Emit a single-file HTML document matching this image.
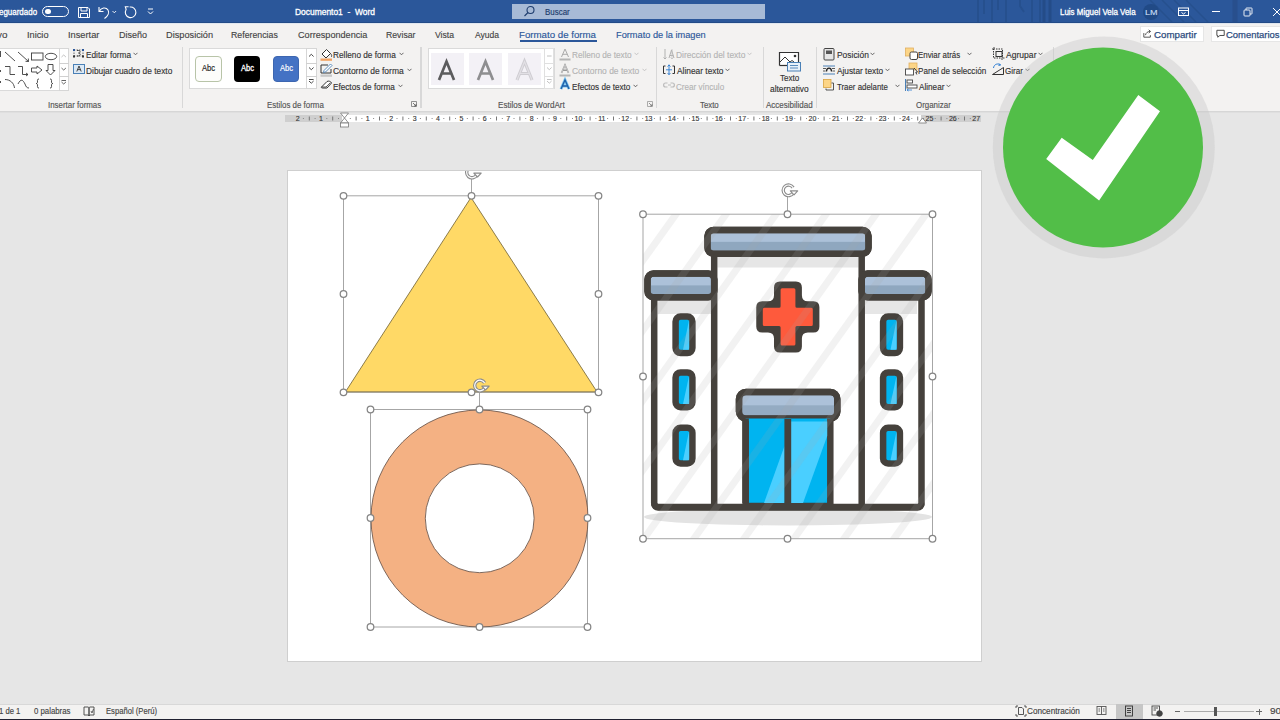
<!DOCTYPE html>
<html><head><meta charset="utf-8">
<style>
*{margin:0;padding:0;box-sizing:border-box}
html,body{width:1280px;height:720px;overflow:hidden;background:#e6e6e6;font-family:"Liberation Sans",sans-serif;position:relative}
.a{position:absolute;white-space:nowrap}
</style></head>
<body>
<div class="a" style="left:0;top:23px;width:1280px;height:87.5px;background:#f3f2f1"></div>
<div class="a" style="left:0;top:110.5px;width:1280px;height:1px;background:#d6d6d6"></div>
<div class="a" style="left:0;top:111.5px;width:1280px;height:1px;background:#dfdfdf"></div>
<div class="a" style="left:0;top:0;width:1280px;height:23px;background:#2b579a"></div>
<div class="a" style="left:0;top:22px;width:1280px;height:1px;background:#234b87"></div>
<svg class="a" style="left:940px;top:0" width="340" height="22" viewBox="0 0 340 22"><g stroke="#26508e" fill="none"><path d="M38 0 V22 M44 0 V14 M52 0 V22 M58 0 V10 M66 0 V22 M80 0 V6 L84 12 M92 0 V22 M100 0 V22" stroke-width="2"/><path d="M104 0 V22 M110 0 V22" stroke-width="3" stroke="#244c88"/><path d="M210 0 L232 22 M222 0 L244 22 M234 0 L256 22 M246 0 L268 22" stroke-width="1.5"/><path d="M295 0 V22" stroke-width="5" stroke="#284f8d"/></g></svg>
<div class="a" style="left:42px;top:5.5px;width:26.5px;height:11.5px;border:1.2px solid #fff;border-radius:6px"></div>
<div class="a" style="left:45.3px;top:8.8px;width:5.5px;height:5.5px;background:#fff;border-radius:50%"></div>
<svg class="a" style="left:77px;top:6px" width="14" height="13" viewBox="0 0 14 13" fill="none" stroke="#fff" stroke-width="1">
<path d="M1.5 1.5 H11 L12.5 3 V11.5 H1.5 Z"/><path d="M4 1.5 V5 H10 V1.5"/><path d="M3.5 11.5 V7.5 H10.5 V11.5"/></svg>
<svg class="a" style="left:97px;top:5px" width="22" height="15" viewBox="0 0 22 15" fill="none" stroke="#fff" stroke-width="1.1">
<path d="M2 2 V6.5 H6.5"/><path d="M2.3 6.3 C4 2.5 9 1.8 11 5 C12.5 7.5 11 11 7.5 13.5"/><path d="M15.5 6 L17.3 7.8 L19.1 6" stroke-width="0.9"/></svg>
<svg class="a" style="left:123px;top:4px" width="15" height="16" viewBox="0 0 15 16" fill="none" stroke="#fff" stroke-width="1.1">
<path d="M6.68 3.08 A5.3 5.3 0 1 1 3.01 5.65"/><path d="M5.6 2.7 H2.3 L3.3 5.9"/></svg>
<svg class="a" style="left:146px;top:7px" width="9" height="9" viewBox="0 0 9 9" fill="none" stroke="#fff" stroke-width="1">
<path d="M2 2 H7"/><path d="M2 4.5 L4.5 7 L7 4.5"/></svg>
<div class="a" style="left:512px;top:3.7px;width:253px;height:15.7px;background:#a7bad6"></div>
<svg class="a" style="left:523px;top:5px" width="13" height="13" viewBox="0 0 13 13" fill="none" stroke="#1e3d6e" stroke-width="1.1">
<circle cx="7.5" cy="5" r="3.5"/><path d="M5 7.5 L1.5 11"/></svg>
<div class="a" style="left:1143px;top:4px;width:16px;height:16px;border-radius:50%;background:#214a86"></div>
<svg class="a" style="left:1177px;top:7px" width="13" height="10" viewBox="0 0 13 10" fill="none" stroke="#fff" stroke-width="1">
<rect x="1.5" y="1" width="10" height="7.5"/><path d="M1.5 3.5 H11.5"/><path d="M4.5 5.5 L6.5 7 L8.5 5.5"/></svg>
<div class="a" style="left:1212px;top:11px;width:8px;height:1px;background:#fff"></div>
<svg class="a" style="left:1243px;top:7px" width="10" height="10" viewBox="0 0 10 10" fill="none" stroke="#fff" stroke-width="0.9">
<rect x="1" y="3" width="6" height="6" rx="0.8"/><path d="M3 3 V1.5 Q3 1 3.5 1 H8.5 Q9 1 9 1.5 V6.5 Q9 7 8.5 7 H7"/></svg>
<svg class="a" style="left:1272px;top:7px" width="10" height="10" viewBox="0 0 10 10" fill="none" stroke="#fff" stroke-width="1">
<path d="M1 1 L9 9 M9 1 L1 9"/></svg>
<div class="a" style="left:0;top:23px;width:1280px;height:1px;background:#dfe6ef"></div>
<div class="a" style="left:520px;top:40px;width:77px;height:2px;background:#2b579a"></div>
<div class="a" style="left:1139.5px;top:25.5px;width:64px;height:16px;background:#fff;border:1px solid #e6e6e6"></div>
<div class="a" style="left:1210.5px;top:25.5px;width:71px;height:16px;background:#fff;border:1px solid #e6e6e6"></div>
<svg class="a" style="left:1143px;top:29px" width="9" height="9" viewBox="0 0 11 11" fill="none" stroke="#444" stroke-width="1.1">
<path d="M1 5 V10 H9 V7.5"/><path d="M3 7.5 C3.5 4.5 6 3 8.5 3"/><path d="M7 1 L9.3 3 L7 5"/></svg>
<svg class="a" style="left:1215.5px;top:29px" width="9.5" height="9.5" viewBox="0 0 11 11" fill="none" stroke="#444" stroke-width="1.1">
<path d="M1 1.5 H9.5 V7.5 H4.5 L2 9.5 V7.5 H1 Z"/></svg>
<div class="a" style="left:181.5px;top:47px;width:1.5px;height:61px;background:#d8d8d8"></div>
<div class="a" style="left:420px;top:47px;width:1.5px;height:61px;background:#d8d8d8"></div>
<div class="a" style="left:655.5px;top:47px;width:1.5px;height:61px;background:#d8d8d8"></div>
<div class="a" style="left:762.5px;top:47px;width:1.5px;height:61px;background:#d8d8d8"></div>
<div class="a" style="left:815.5px;top:47px;width:1.5px;height:61px;background:#d8d8d8"></div>
<div class="a" style="left:1052.5px;top:47px;width:1.5px;height:61px;background:#d8d8d8"></div>
<div class="a" style="left:-2px;top:48px;width:71px;height:43px;background:#fff;border:1px solid #dadada"></div>
<div class="a" style="left:58.5px;top:48px;width:10.5px;height:43px;border:1px solid #d6d6d6;background:#fff"></div>
<div class="a" style="left:58.5px;top:62.5px;width:10.5px;height:1px;background:#d0d0d0"></div>
<div class="a" style="left:58.5px;top:75.5px;width:10.5px;height:1px;background:#d0d0d0"></div>
<svg class="a" style="left:0;top:46px" width="70" height="46" viewBox="0 46 70 46" fill="none" stroke="#3c3c3c" stroke-width="0.9">
<path d="M0.5 51 V57"/>
<path d="M5 52 L15 61"/>
<path d="M18 52 L28.5 61.5 M28.5 61.5 L25.5 61.3 M28.5 61.5 L28.3 58.5"/>
<rect x="31.5" y="53" width="11.5" height="7"/>
<ellipse cx="51" cy="56.5" rx="5.7" ry="3.2"/>
<path d="M0.5 70 V72"/>
<path d="M5 66.5 H10 V74.5 H15"/>
<path d="M18 66.5 H22.5 V74.5 H28 M28 74.5 L26 73 M28 74.5 L26 76"/>
<path d="M31.5 68 H37 V66 L42 70 L37 74 V72 H31.5 Z"/>
<path d="M48 64.5 H53 V70.5 H55 L50.5 75 L46 70.5 H48 Z"/>
<path d="M0.5 81 V83"/>
<path d="M5 79.5 C10 79.5 14 83 14.5 88"/>
<path d="M18 84 C21 78 23 80 25 84 C26 87 27 88 29 88"/>
<path d="M39 79 C37 79 37.5 80 37.5 82 C37.5 83 37 83.5 36 83.5 C37 83.5 37.5 84 37.5 85 C37.5 87 37 88 39 88"/>
<path d="M50 79 C52 79 51.5 80 51.5 82 C51.5 83 52 83.5 53 83.5 C52 83.5 51.5 84 51.5 85 C51.5 87 52 88 50 88"/>
<path d="M61.5 57 L63.7 55 L65.9 57" stroke="#bbb"/>
<path d="M61.5 68 L63.7 70 L65.9 68" stroke="#555"/>
<path d="M61.5 80.5 H66 M61.5 82 L63.7 84 L65.9 82" stroke="#555"/>
</svg>
<svg class="a" style="left:72px;top:47px" width="14" height="30" viewBox="0 0 14 30">
<path d="M2 3 H11 M2 3 V9 M2 9 H11 M11 3 V9" stroke="#3a3a3a" stroke-width="0.9" stroke-dasharray="1.2 1.4" fill="none"/><path d="M5 3.5 C9 3 9 6 6.5 6 C9 6 9 9.5 5 9" stroke="#333" stroke-width="0.9" fill="none"/>
<rect x="1" y="2" width="2" height="2" fill="#2b579a"/><rect x="10" y="2" width="2" height="2" fill="#2b579a"/><rect x="1" y="8.5" width="2" height="2" fill="#333"/><rect x="10" y="8.5" width="2" height="2" fill="#333"/>
<rect x="1.5" y="17.5" width="11" height="9" fill="#dce9f5" stroke="#4a80b6" stroke-width="1"/>
<path d="M4.8 24.5 L7 19 L9.2 24.5 M5.6 22.6 H8.4" stroke="#333" stroke-width="0.9" fill="none"/>
</svg>
<svg class="a" style="left:133px;top:52px" width="5" height="4" viewBox="0 0 5 4"><path d="M0.5 0.8 L2.5 2.8 L4.5 0.8" stroke="#555" stroke-width="0.9" fill="none"/></svg>
<div class="a" style="left:188.5px;top:48.4px;width:128px;height:41px;background:#fff;border:1px solid #dadada"></div>
<div class="a" style="left:306px;top:48.4px;width:10.5px;height:41px;border:1px solid #d6d6d6;background:#fff"></div>
<div class="a" style="left:306px;top:62.5px;width:10.5px;height:1px;background:#d0d0d0"></div>
<div class="a" style="left:306px;top:75.8px;width:10.5px;height:1px;background:#d0d0d0"></div>
<svg class="a" style="left:306px;top:48px" width="11" height="42" viewBox="0 0 11 42" fill="none" stroke="#333" stroke-width="0.9"><path d="M3 8.5 L5.3 6.3 L7.6 8.5"/><path d="M3 19.5 L5.3 21.7 L7.6 19.5"/><path d="M3 31.5 H7.6 M3 33 L5.3 35.2 L7.6 33"/></svg>
<div class="a" style="left:195px;top:56px;width:26.6px;height:25.7px;background:#fdfdfb;border:1px solid #b8c4a8;border-radius:4px"></div>
<div class="a" style="left:234px;top:56px;width:26.3px;height:25.7px;background:#000;border-radius:4px"></div>
<div class="a" style="left:273px;top:56px;width:26px;height:25.7px;background:#4472c4;border-radius:4px;border:1px solid #3d66b0"></div>
<svg class="a" style="left:319px;top:46px" width="15" height="46" viewBox="0 0 15 46">
<path d="M3 8 L7.5 3.5 L11.5 7.5 L7 12 Z" fill="#fff" stroke="#333" stroke-width="1"/>
<path d="M11.5 7.5 C13 9 13 10.5 12 11" stroke="#333" stroke-width="0.9" fill="none"/>
<rect x="1.5" y="12.5" width="11.5" height="2.3" fill="#f3a362"/>
<path d="M2 27 V19 H9 M2 27 H12 V23" stroke="#333" stroke-width="1" fill="none"/>
<path d="M5 24.5 L11.5 18 L13 19.5 L6.5 26 L4.5 26.5 Z" fill="#fff" stroke="#4a80b6" stroke-width="0.9"/>
<rect x="1.5" y="28.5" width="11.5" height="2.3" fill="#c8c8c8"/>
<path d="M2.5 41 L8 35.5 C9.5 34.5 12 35.5 12.5 37 L8 42 H4 C2.8 42 2 41.8 2.5 41 Z" fill="#fff" stroke="#333" stroke-width="1"/>
<path d="M2.5 41 L7 41 L11 37" stroke="#333" stroke-width="0.8" fill="none"/>
</svg>
<svg class="a" style="left:398.5px;top:52px" width="5" height="4" viewBox="0 0 5 4"><path d="M0.5 0.8 L2.5 2.8 L4.5 0.8" stroke="#555" stroke-width="0.9" fill="none"/></svg>
<svg class="a" style="left:406.5px;top:68px" width="5" height="4" viewBox="0 0 5 4"><path d="M0.5 0.8 L2.5 2.8 L4.5 0.8" stroke="#555" stroke-width="0.9" fill="none"/></svg>
<svg class="a" style="left:398px;top:84px" width="5" height="4" viewBox="0 0 5 4"><path d="M0.5 0.8 L2.5 2.8 L4.5 0.8" stroke="#555" stroke-width="0.9" fill="none"/></svg>
<svg class="a" style="left:411px;top:101px" width="7" height="7" viewBox="0 0 7 7"><path d="M0.5 0.5 H5.5 V5.5 H0.5 Z" stroke="#777" stroke-width="0.8" fill="none"/><path d="M2 2 L5 5 M5 3 V5 H3" stroke="#555" stroke-width="0.8" fill="none"/></svg>
<div class="a" style="left:427.5px;top:48.4px;width:127px;height:41px;background:#fff;border:1px solid #dadada"></div>
<div class="a" style="left:544.4px;top:48.4px;width:10px;height:41px;border:1px solid #e0e0e0;background:#fff"></div>
<div class="a" style="left:544.4px;top:62.5px;width:10px;height:1px;background:#e0e0e0"></div>
<div class="a" style="left:544.4px;top:75.8px;width:10px;height:1px;background:#e0e0e0"></div>
<svg class="a" style="left:544px;top:48px" width="11" height="42" viewBox="0 0 11 42" fill="none" stroke="#bbb" stroke-width="0.9"><path d="M3 8 H7.6"/><path d="M3 19.5 L5.3 21.7 L7.6 19.5"/><path d="M3 31.5 H7.6 M3 33 L5.3 35.2 L7.6 33"/></svg>
<div class="a" style="left:430.6px;top:52.75px;width:33px;height:32.5px;background:#f3f1f6"></div>
<div class="a" style="left:469.4px;top:52.75px;width:33px;height:32.5px;background:#f3f1f6"></div>
<div class="a" style="left:508px;top:52.75px;width:33px;height:32.5px;background:#f3f1f6"></div>
<svg class="a" style="left:430px;top:52px" width="114" height="34" viewBox="430 52 114 34">
<path d="M439 80 L446.5 61.5 L454 80 M441.6 73.5 H451.4" fill="none" stroke="#5c5c5e" stroke-width="2.7"/>
<path d="M478 80 L485.5 61.5 L493 80 M480.6 73.5 H490.4" fill="none" stroke="#8e8e90" stroke-width="2.7"/>
<path d="M517 80 L524.5 61.5 L532 80 M519.6 73.5 H529.4" fill="none" stroke="#cfcdd2" stroke-width="3.2"/>
<path d="M517 80 L524.5 61.5 L532 80 M519.6 73.5 H529.4" fill="none" stroke="#e2e0e5" stroke-width="1.2"/>
</svg>
<svg class="a" style="left:558px;top:46px" width="14" height="46" viewBox="0 0 14 46">
<path d="M3.5 11 L7 3 L10.5 11 M4.8 8.3 H9.2" fill="none" stroke="#aaa" stroke-width="1"/>
<rect x="1.5" y="12.5" width="11" height="2" fill="#b5b5b5"/>
<path d="M3.5 27 L7 19 L10.5 27 M4.8 24.3 H9.2" fill="none" stroke="#999" stroke-width="1.6"/>
<path d="M3.5 27 L7 19 L10.5 27" fill="none" stroke="#eee" stroke-width="0.5"/>
<rect x="1.5" y="28.5" width="11" height="2" fill="#b5b5b5"/>
<path d="M3 43 L7 34 L11 43 M4.5 40 H9.5" fill="none" stroke="#7cc7f0" stroke-width="3"/>
<path d="M3 43 L7 34 L11 43 M4.5 40 H9.5" fill="none" stroke="#1f5fa8" stroke-width="1.4"/>
</svg>
<svg class="a" style="left:634px;top:52px" width="5" height="4" viewBox="0 0 5 4"><path d="M0.5 0.8 L2.5 2.8 L4.5 0.8" stroke="#c0c0c0" stroke-width="0.9" fill="none"/></svg>
<svg class="a" style="left:641.5px;top:68px" width="5" height="4" viewBox="0 0 5 4"><path d="M0.5 0.8 L2.5 2.8 L4.5 0.8" stroke="#c0c0c0" stroke-width="0.9" fill="none"/></svg>
<svg class="a" style="left:633px;top:84px" width="5" height="4" viewBox="0 0 5 4"><path d="M0.5 0.8 L2.5 2.8 L4.5 0.8" stroke="#555" stroke-width="0.9" fill="none"/></svg>
<svg class="a" style="left:647px;top:101px" width="7" height="7" viewBox="0 0 7 7"><path d="M0.5 0.5 H5.5 V5.5 H0.5 Z" stroke="#999" stroke-width="0.8" fill="none"/><path d="M2 2 L5 5 M5 3 V5 H3" stroke="#777" stroke-width="0.8" fill="none"/></svg>
<svg class="a" style="left:662px;top:46px" width="14" height="46" viewBox="0 0 14 46">
<path d="M3 3 V13 M1.5 11.5 L3 13 L4.5 11.5" stroke="#aaa" stroke-width="0.9" fill="none"/>
<path d="M7 12 L9.5 4 L12 12 M7.8 9.5 H11.2" stroke="#aaa" stroke-width="0.9" fill="none"/>
<path d="M10 3 V13 M8.5 11.5 L10 13 L11.5 11.5" stroke="#bbb" stroke-width="0.7" fill="none"/>
<path d="M3.5 20 H1.5 V27.5 H3.5 M10.5 20 H12.5 V27.5 H10.5" stroke="#333" stroke-width="1" fill="none"/>
<path d="M7 18.5 V29 M5.5 20.5 L7 19 L8.5 20.5 M5.5 27 L7 28.5 L8.5 27 M4 23.8 H10" stroke="#2b7cd3" stroke-width="0.9" fill="none"/>
<path d="M5.5 37 H3.5 C1 37 1 41 3.5 41 H5.5 M6 39 H9 M8.5 37 H10.5 C13 37 13 41 10.5 41 H8.5" stroke="#bbb" stroke-width="1.2" fill="none"/>
</svg>
<svg class="a" style="left:747px;top:52px" width="5" height="4" viewBox="0 0 5 4"><path d="M0.5 0.8 L2.5 2.8 L4.5 0.8" stroke="#c0c0c0" stroke-width="0.9" fill="none"/></svg>
<svg class="a" style="left:725px;top:68px" width="5" height="4" viewBox="0 0 5 4"><path d="M0.5 0.8 L2.5 2.8 L4.5 0.8" stroke="#555" stroke-width="0.9" fill="none"/></svg>
<svg class="a" style="left:777px;top:50px" width="26" height="24" viewBox="0 0 26 24">
<path d="M2.5 15.5 V2.5 H21.5 V12" stroke="#333" stroke-width="1.2" fill="#fff"/>
<path d="M2.5 15.5 H10" stroke="#333" stroke-width="1.2"/>
<path d="M3 12 L8 7 L13 12 L15 10.5 L17 12" stroke="#333" stroke-width="1" fill="none"/>
<circle cx="18" cy="6" r="1.3" fill="#333"/>
<rect x="10.5" y="12.5" width="13" height="8.5" fill="#e8f1fa" stroke="#4a80b6" stroke-width="1"/>
<path d="M13 15.5 H21 M13 18 H21" stroke="#4a80b6" stroke-width="0.9"/>
</svg>
<svg class="a" style="left:822px;top:46px" width="14" height="46" viewBox="0 0 14 46">
<rect x="2" y="2.5" width="10" height="11.5" rx="1" fill="#e6e6e6" stroke="#444" stroke-width="1"/>
<rect x="4" y="4.5" width="6" height="3.5" fill="#555"/>
<path d="M1 20 H13 M1 28 H13" stroke="#4a80b6" stroke-width="1"/>
<path d="M1 22.5 H4 M10 22.5 H13 M1 25 H3.5 M10.5 25 H13" stroke="#333" stroke-width="0.8"/>
<path d="M4.5 25.5 C4.5 21 9.5 21 9.5 25.5" stroke="#222" stroke-width="1.3" fill="none"/>
<rect x="1.5" y="33.5" width="7.5" height="8" fill="#fcd587" stroke="#d9a441" stroke-width="0.8"/>
<path d="M9.5 37 H11.5 V44 H4 V42.5" stroke="#444" stroke-width="0.9" fill="none"/>
</svg>
<svg class="a" style="left:870px;top:52px" width="5" height="4" viewBox="0 0 5 4"><path d="M0.5 0.8 L2.5 2.8 L4.5 0.8" stroke="#555" stroke-width="0.9" fill="none"/></svg>
<svg class="a" style="left:885px;top:68px" width="5" height="4" viewBox="0 0 5 4"><path d="M0.5 0.8 L2.5 2.8 L4.5 0.8" stroke="#555" stroke-width="0.9" fill="none"/></svg>
<svg class="a" style="left:895px;top:84px" width="5" height="4" viewBox="0 0 5 4"><path d="M0.5 0.8 L2.5 2.8 L4.5 0.8" stroke="#555" stroke-width="0.9" fill="none"/></svg>
<svg class="a" style="left:904px;top:46px" width="15" height="46" viewBox="0 0 15 46">
<rect x="1.5" y="2" width="8" height="8" fill="#fcd587" stroke="#e0b060" stroke-width="0.8"/>
<rect x="6" y="6" width="7.5" height="7.5" rx="1.5" fill="#fff" stroke="#444" stroke-width="1"/>
<rect x="5" y="17" width="8" height="7" fill="#fcd587" stroke="#e0b060" stroke-width="0.8"/>
<rect x="1.5" y="23" width="8" height="6" fill="#fff" stroke="#444" stroke-width="0.9"/>
<path d="M10 22 L13.5 26 L11.8 26.3 L12.8 28.5" stroke="#222" stroke-width="0.9" fill="#fff"/>
<path d="M1.5 33 V45" stroke="#4a80b6" stroke-width="1"/>
<rect x="3" y="34" width="5.5" height="3" fill="#fff" stroke="#444" stroke-width="0.9"/>
<rect x="3" y="39" width="10" height="3" fill="#fff" stroke="#444" stroke-width="0.9"/>
<path d="M3 44 H8 M3 44 L4.5 43 M3 44 L4.5 45" stroke="#2b7cd3" stroke-width="0.8"/>
</svg>
<svg class="a" style="left:967px;top:52px" width="5" height="4" viewBox="0 0 5 4"><path d="M0.5 0.8 L2.5 2.8 L4.5 0.8" stroke="#555" stroke-width="0.9" fill="none"/></svg>
<svg class="a" style="left:946px;top:84px" width="5" height="4" viewBox="0 0 5 4"><path d="M0.5 0.8 L2.5 2.8 L4.5 0.8" stroke="#555" stroke-width="0.9" fill="none"/></svg>
<svg class="a" style="left:1038px;top:52px" width="5" height="4" viewBox="0 0 5 4"><path d="M0.5 0.8 L2.5 2.8 L4.5 0.8" stroke="#555" stroke-width="0.9" fill="none"/></svg>
<svg class="a" style="left:1025px;top:68px" width="5" height="4" viewBox="0 0 5 4"><path d="M0.5 0.8 L2.5 2.8 L4.5 0.8" stroke="#555" stroke-width="0.9" fill="none"/></svg>
<svg class="a" style="left:991px;top:46px" width="14" height="32" viewBox="0 0 14 32">
<rect x="2.5" y="3" width="9" height="9" stroke="#333" stroke-width="1" fill="none" stroke-dasharray="1.5 1"/>
<rect x="5" y="5.5" width="6" height="5" stroke="#333" stroke-width="1" fill="none"/>
<path d="M1 3 H2.5 M12 12 H13.5 M3 1 V2.5 M11 12.5 V14" stroke="#333" stroke-width="0.9"/>
<path d="M1.5 28.5 L12.5 21.5 V28.5 Z" stroke="#333" stroke-width="1" fill="none"/>
<path d="M2.5 22 C3 18 7 17 9.5 19 M9.5 19 L8 17.5 M9.5 19 L7.5 19.5" stroke="#2b7cd3" stroke-width="1" fill="none"/>
</svg>
<div class="a" style="left:285px;top:115px;width:696px;height:7px;background:#fff"></div>
<div class="a" style="left:285px;top:115px;width:57px;height:7px;background:#cfcfcf"></div>
<div class="a" style="left:921px;top:115px;width:60px;height:7px;background:#cfcfcf"></div>
<svg class="a" style="left:0;top:110px" width="1280" height="20" viewBox="0 110 1280 20"><text x="297.6" y="121" font-size="7" text-anchor="middle" fill="#3a3a3a" stroke="#3a3a3a" stroke-width="0.15" font-family="Liberation Sans">2</text><rect x="302.9" y="118" width="1" height="1" fill="#888"/><rect x="308.8" y="116.5" width="1" height="4" fill="#777"/><rect x="314.6" y="118" width="1" height="1" fill="#888"/><text x="321.0" y="121" font-size="7" text-anchor="middle" fill="#3a3a3a" stroke="#3a3a3a" stroke-width="0.15" font-family="Liberation Sans">1</text><rect x="326.3" y="118" width="1" height="1" fill="#888"/><rect x="332.2" y="116.5" width="1" height="4" fill="#777"/><rect x="338.0" y="118" width="1" height="1" fill="#888"/><rect x="349.8" y="118" width="1" height="1" fill="#888"/><rect x="355.6" y="116.5" width="1" height="4" fill="#777"/><rect x="361.4" y="118" width="1" height="1" fill="#888"/><text x="367.8" y="121" font-size="7" text-anchor="middle" fill="#3a3a3a" stroke="#3a3a3a" stroke-width="0.15" font-family="Liberation Sans">1</text><rect x="373.1" y="118" width="1" height="1" fill="#888"/><rect x="379.0" y="116.5" width="1" height="4" fill="#777"/><rect x="384.8" y="118" width="1" height="1" fill="#888"/><text x="391.2" y="121" font-size="7" text-anchor="middle" fill="#3a3a3a" stroke="#3a3a3a" stroke-width="0.15" font-family="Liberation Sans">2</text><rect x="396.5" y="118" width="1" height="1" fill="#888"/><rect x="402.4" y="116.5" width="1" height="4" fill="#777"/><rect x="408.2" y="118" width="1" height="1" fill="#888"/><text x="414.6" y="121" font-size="7" text-anchor="middle" fill="#3a3a3a" stroke="#3a3a3a" stroke-width="0.15" font-family="Liberation Sans">3</text><rect x="419.9" y="118" width="1" height="1" fill="#888"/><rect x="425.8" y="116.5" width="1" height="4" fill="#777"/><rect x="431.6" y="118" width="1" height="1" fill="#888"/><text x="438.0" y="121" font-size="7" text-anchor="middle" fill="#3a3a3a" stroke="#3a3a3a" stroke-width="0.15" font-family="Liberation Sans">4</text><rect x="443.3" y="118" width="1" height="1" fill="#888"/><rect x="449.2" y="116.5" width="1" height="4" fill="#777"/><rect x="455.0" y="118" width="1" height="1" fill="#888"/><text x="461.4" y="121" font-size="7" text-anchor="middle" fill="#3a3a3a" stroke="#3a3a3a" stroke-width="0.15" font-family="Liberation Sans">5</text><rect x="466.8" y="118" width="1" height="1" fill="#888"/><rect x="472.6" y="116.5" width="1" height="4" fill="#777"/><rect x="478.4" y="118" width="1" height="1" fill="#888"/><text x="484.8" y="121" font-size="7" text-anchor="middle" fill="#3a3a3a" stroke="#3a3a3a" stroke-width="0.15" font-family="Liberation Sans">6</text><rect x="490.1" y="118" width="1" height="1" fill="#888"/><rect x="496.0" y="116.5" width="1" height="4" fill="#777"/><rect x="501.8" y="118" width="1" height="1" fill="#888"/><text x="508.2" y="121" font-size="7" text-anchor="middle" fill="#3a3a3a" stroke="#3a3a3a" stroke-width="0.15" font-family="Liberation Sans">7</text><rect x="513.5" y="118" width="1" height="1" fill="#888"/><rect x="519.4" y="116.5" width="1" height="4" fill="#777"/><rect x="525.2" y="118" width="1" height="1" fill="#888"/><text x="531.6" y="121" font-size="7" text-anchor="middle" fill="#3a3a3a" stroke="#3a3a3a" stroke-width="0.15" font-family="Liberation Sans">8</text><rect x="536.9" y="118" width="1" height="1" fill="#888"/><rect x="542.8" y="116.5" width="1" height="4" fill="#777"/><rect x="548.6" y="118" width="1" height="1" fill="#888"/><text x="555.0" y="121" font-size="7" text-anchor="middle" fill="#3a3a3a" stroke="#3a3a3a" stroke-width="0.15" font-family="Liberation Sans">9</text><rect x="560.3" y="118" width="1" height="1" fill="#888"/><rect x="566.2" y="116.5" width="1" height="4" fill="#777"/><rect x="572.0" y="118" width="1" height="1" fill="#888"/><text x="578.4" y="121" font-size="7" text-anchor="middle" fill="#3a3a3a" stroke="#3a3a3a" stroke-width="0.15" font-family="Liberation Sans">10</text><rect x="583.8" y="118" width="1" height="1" fill="#888"/><rect x="589.6" y="116.5" width="1" height="4" fill="#777"/><rect x="595.4" y="118" width="1" height="1" fill="#888"/><text x="601.8" y="121" font-size="7" text-anchor="middle" fill="#3a3a3a" stroke="#3a3a3a" stroke-width="0.15" font-family="Liberation Sans">11</text><rect x="607.1" y="118" width="1" height="1" fill="#888"/><rect x="613.0" y="116.5" width="1" height="4" fill="#777"/><rect x="618.8" y="118" width="1" height="1" fill="#888"/><text x="625.2" y="121" font-size="7" text-anchor="middle" fill="#3a3a3a" stroke="#3a3a3a" stroke-width="0.15" font-family="Liberation Sans">12</text><rect x="630.5" y="118" width="1" height="1" fill="#888"/><rect x="636.4" y="116.5" width="1" height="4" fill="#777"/><rect x="642.2" y="118" width="1" height="1" fill="#888"/><text x="648.6" y="121" font-size="7" text-anchor="middle" fill="#3a3a3a" stroke="#3a3a3a" stroke-width="0.15" font-family="Liberation Sans">13</text><rect x="653.9" y="118" width="1" height="1" fill="#888"/><rect x="659.8" y="116.5" width="1" height="4" fill="#777"/><rect x="665.6" y="118" width="1" height="1" fill="#888"/><text x="672.0" y="121" font-size="7" text-anchor="middle" fill="#3a3a3a" stroke="#3a3a3a" stroke-width="0.15" font-family="Liberation Sans">14</text><rect x="677.3" y="118" width="1" height="1" fill="#888"/><rect x="683.2" y="116.5" width="1" height="4" fill="#777"/><rect x="689.0" y="118" width="1" height="1" fill="#888"/><text x="695.4" y="121" font-size="7" text-anchor="middle" fill="#3a3a3a" stroke="#3a3a3a" stroke-width="0.15" font-family="Liberation Sans">15</text><rect x="700.8" y="118" width="1" height="1" fill="#888"/><rect x="706.6" y="116.5" width="1" height="4" fill="#777"/><rect x="712.4" y="118" width="1" height="1" fill="#888"/><text x="718.8" y="121" font-size="7" text-anchor="middle" fill="#3a3a3a" stroke="#3a3a3a" stroke-width="0.15" font-family="Liberation Sans">16</text><rect x="724.1" y="118" width="1" height="1" fill="#888"/><rect x="730.0" y="116.5" width="1" height="4" fill="#777"/><rect x="735.8" y="118" width="1" height="1" fill="#888"/><text x="742.2" y="121" font-size="7" text-anchor="middle" fill="#3a3a3a" stroke="#3a3a3a" stroke-width="0.15" font-family="Liberation Sans">17</text><rect x="747.5" y="118" width="1" height="1" fill="#888"/><rect x="753.4" y="116.5" width="1" height="4" fill="#777"/><rect x="759.2" y="118" width="1" height="1" fill="#888"/><text x="765.6" y="121" font-size="7" text-anchor="middle" fill="#3a3a3a" stroke="#3a3a3a" stroke-width="0.15" font-family="Liberation Sans">18</text><rect x="770.9" y="118" width="1" height="1" fill="#888"/><rect x="776.8" y="116.5" width="1" height="4" fill="#777"/><rect x="782.6" y="118" width="1" height="1" fill="#888"/><text x="789.0" y="121" font-size="7" text-anchor="middle" fill="#3a3a3a" stroke="#3a3a3a" stroke-width="0.15" font-family="Liberation Sans">19</text><rect x="794.3" y="118" width="1" height="1" fill="#888"/><rect x="800.2" y="116.5" width="1" height="4" fill="#777"/><rect x="806.0" y="118" width="1" height="1" fill="#888"/><text x="812.4" y="121" font-size="7" text-anchor="middle" fill="#3a3a3a" stroke="#3a3a3a" stroke-width="0.15" font-family="Liberation Sans">20</text><rect x="817.8" y="118" width="1" height="1" fill="#888"/><rect x="823.6" y="116.5" width="1" height="4" fill="#777"/><rect x="829.4" y="118" width="1" height="1" fill="#888"/><text x="835.8" y="121" font-size="7" text-anchor="middle" fill="#3a3a3a" stroke="#3a3a3a" stroke-width="0.15" font-family="Liberation Sans">21</text><rect x="841.1" y="118" width="1" height="1" fill="#888"/><rect x="847.0" y="116.5" width="1" height="4" fill="#777"/><rect x="852.8" y="118" width="1" height="1" fill="#888"/><text x="859.2" y="121" font-size="7" text-anchor="middle" fill="#3a3a3a" stroke="#3a3a3a" stroke-width="0.15" font-family="Liberation Sans">22</text><rect x="864.5" y="118" width="1" height="1" fill="#888"/><rect x="870.4" y="116.5" width="1" height="4" fill="#777"/><rect x="876.2" y="118" width="1" height="1" fill="#888"/><text x="882.6" y="121" font-size="7" text-anchor="middle" fill="#3a3a3a" stroke="#3a3a3a" stroke-width="0.15" font-family="Liberation Sans">23</text><rect x="887.9" y="118" width="1" height="1" fill="#888"/><rect x="893.8" y="116.5" width="1" height="4" fill="#777"/><rect x="899.6" y="118" width="1" height="1" fill="#888"/><text x="906.0" y="121" font-size="7" text-anchor="middle" fill="#3a3a3a" stroke="#3a3a3a" stroke-width="0.15" font-family="Liberation Sans">24</text><rect x="911.3" y="118" width="1" height="1" fill="#888"/><rect x="917.2" y="116.5" width="1" height="4" fill="#777"/><rect x="923.0" y="118" width="1" height="1" fill="#888"/><text x="929.4" y="121" font-size="7" text-anchor="middle" fill="#3a3a3a" stroke="#3a3a3a" stroke-width="0.15" font-family="Liberation Sans">25</text><rect x="934.7" y="118" width="1" height="1" fill="#888"/><rect x="940.6" y="116.5" width="1" height="4" fill="#777"/><rect x="946.4" y="118" width="1" height="1" fill="#888"/><text x="952.8" y="121" font-size="7" text-anchor="middle" fill="#3a3a3a" stroke="#3a3a3a" stroke-width="0.15" font-family="Liberation Sans">26</text><rect x="958.1" y="118" width="1" height="1" fill="#888"/><rect x="964.0" y="116.5" width="1" height="4" fill="#777"/><rect x="969.8" y="118" width="1" height="1" fill="#888"/><text x="976.2" y="121" font-size="7" text-anchor="middle" fill="#3a3a3a" stroke="#3a3a3a" stroke-width="0.15" font-family="Liberation Sans">27</text><path d="M340.5 113 H348.5 L344.5 118 Z M340.5 123 L344.5 118 L348.5 123 Z" fill="#fff" stroke="#777" stroke-width="0.8"/><rect x="340.5" y="123" width="8" height="4" fill="#fff" stroke="#777" stroke-width="0.8"/><path d="M918.5 123 L922.5 118 L926.5 123 Z" fill="#fff" stroke="#777" stroke-width="0.8"/></svg>
<div class="a" style="left:287px;top:170px;width:695px;height:492px;background:#fff;border:1px solid #cfcfcf"></div>
<svg class="a" style="left:0;top:0" width="1280" height="720" viewBox="0 0 1280 720"><defs><clipPath id="pg"><rect x="288" y="171" width="693" height="490"/></clipPath></defs><g stroke="#a6a6a6" stroke-width="1" fill="none"><rect x="343.5" y="195.8" width="255" height="196.5"/></g><path d="M471 197.5 L345.5 391.8 L597 391.8 Z" fill="#ffd966" stroke="#7f6f3f" stroke-width="0.9"/><line x1="471.5" y1="179" x2="471.5" y2="193" stroke="#a6a6a6" stroke-width="1"/><g clip-path="url(#pg)"><path d="M476.60 169.90 A5.3 5.3 0 1 0 476.60 175.10" fill="none" stroke="#8c8c8c" stroke-width="3.4"/><path d="M476.60 169.90 A5.3 5.3 0 1 0 476.60 175.10" fill="none" stroke="#fff" stroke-width="1.2"/><path d="M473.80 173.10 L481.20 173.10 L477.50 177.00 Z" fill="#fff" stroke="#8c8c8c" stroke-width="1.1" stroke-linejoin="round"/></g><circle cx="343.5" cy="195.8" r="3.3" fill="#fff" stroke="#858585" stroke-width="1.25"/><circle cx="471.5" cy="195.8" r="3.3" fill="#fff" stroke="#858585" stroke-width="1.25"/><circle cx="598.5" cy="195.8" r="3.3" fill="#fff" stroke="#858585" stroke-width="1.25"/><circle cx="343.5" cy="294" r="3.3" fill="#fff" stroke="#858585" stroke-width="1.25"/><circle cx="598.5" cy="294" r="3.3" fill="#fff" stroke="#858585" stroke-width="1.25"/><circle cx="343.5" cy="392.3" r="3.3" fill="#fff" stroke="#858585" stroke-width="1.25"/><circle cx="598.5" cy="392.3" r="3.3" fill="#fff" stroke="#858585" stroke-width="1.25"/><rect x="370.5" y="409.5" width="217" height="217.5" fill="none" stroke="#a6a6a6" stroke-width="1"/><path fill-rule="evenodd" d="M479.5 410 A108.5 108.5 0 1 1 479.5 627 A108.5 108.5 0 1 1 479.5 410 Z M479.7 463.9 A54.4 54.4 0 1 0 479.7 572.7 A54.4 54.4 0 1 0 479.7 463.9 Z" fill="#f4b183" stroke="#6f5a4f" stroke-width="0.9"/><line x1="479.5" y1="392" x2="479.5" y2="407" stroke="#a6a6a6" stroke-width="1"/><path d="M484.60 382.90 A5.3 5.3 0 1 0 484.60 388.10" fill="none" stroke="#8c8c8c" stroke-width="3.4"/><path d="M484.60 382.90 A5.3 5.3 0 1 0 484.60 388.10" fill="none" stroke="#fff" stroke-width="1.2"/><path d="M481.80 386.10 L489.20 386.10 L485.50 390.00 Z" fill="#fff" stroke="#8c8c8c" stroke-width="1.1" stroke-linejoin="round"/><circle cx="471.5" cy="392.3" r="3.3" fill="#fff" stroke="#858585" stroke-width="1.25"/><circle cx="370.5" cy="409.5" r="3.3" fill="#fff" stroke="#858585" stroke-width="1.25"/><circle cx="479.5" cy="409.5" r="3.3" fill="#fff" stroke="#858585" stroke-width="1.25"/><circle cx="587.5" cy="409.5" r="3.3" fill="#fff" stroke="#858585" stroke-width="1.25"/><circle cx="370.5" cy="518" r="3.3" fill="#fff" stroke="#858585" stroke-width="1.25"/><circle cx="587.5" cy="518" r="3.3" fill="#fff" stroke="#858585" stroke-width="1.25"/><circle cx="370.5" cy="627" r="3.3" fill="#fff" stroke="#858585" stroke-width="1.25"/><circle cx="479.5" cy="627" r="3.3" fill="#fff" stroke="#858585" stroke-width="1.25"/><circle cx="587.5" cy="627" r="3.3" fill="#fff" stroke="#858585" stroke-width="1.25"/></svg>
<svg class="a" style="left:0;top:0" width="1280" height="720" viewBox="0 0 1280 720">
<defs><clipPath id="sel"><rect x="643" y="214" width="289.5" height="324.5"/></clipPath></defs>
<ellipse cx="788" cy="517" rx="144" ry="8.5" fill="#e3e3e3"/>
<path d="M654.2 297 V503 a4 4 0 0 0 4 4 H917 a4 4 0 0 0 4 -4 V297 Z" fill="#fff"/>
<rect x="657.5" y="300.5" width="53.5" height="13.5" fill="#e6e6e6"/>
<rect x="865" y="300.5" width="52" height="13.5" fill="#e6e6e6"/>
<rect x="717.5" y="257" width="141" height="10.5" fill="#e6e6e6"/>
<path d="M654.2 297 V503 a4 4 0 0 0 4 4 H917.5 a4 4 0 0 0 4 -4 V297" fill="none" stroke="#45413c" stroke-width="6.5" stroke-linejoin="round"/>
<path d="M714.2 250 V507 M861.7 250 V507" stroke="#45413c" stroke-width="6.5"/>
<rect x="647.5" y="273.5" width="66.70000000000005" height="23.80000000000001" rx="6" fill="#acc1d9" stroke="#45413c" stroke-width="6.5"/>
<rect x="650.7" y="285.4" width="60.30000000000005" height="8.700000000000006" fill="#8fa7bf"/>
<rect x="647.5" y="273.5" width="66.70000000000005" height="23.80000000000001" rx="6" fill="none" stroke="#45413c" stroke-width="6.5"/>
<rect x="861.7" y="273.5" width="66.79999999999995" height="23.80000000000001" rx="6" fill="#acc1d9" stroke="#45413c" stroke-width="6.5"/>
<rect x="864.9000000000001" y="285.4" width="60.399999999999956" height="8.700000000000006" fill="#8fa7bf"/>
<rect x="861.7" y="273.5" width="66.79999999999995" height="23.80000000000001" rx="6" fill="none" stroke="#45413c" stroke-width="6.5"/>
<rect x="707.5" y="230" width="161.0" height="23.69999999999999" rx="6" fill="#acc1d9" stroke="#45413c" stroke-width="6.5"/>
<rect x="710.7" y="241.85" width="154.6" height="8.649999999999995" fill="#8fa7bf"/>
<rect x="707.5" y="230" width="161.0" height="23.69999999999999" rx="6" fill="none" stroke="#45413c" stroke-width="6.5"/>
<rect x="675.6" y="316.5" width="16.8" height="36.6" rx="5" fill="#00b4f0" stroke="#45413c" stroke-width="6.5"/>
<path d="M689.1 319.8 V349.8 H683 Z" fill="#4acfff"/>
<rect x="675.6" y="372.4" width="16.8" height="34.79999999999999" rx="5" fill="#00b4f0" stroke="#45413c" stroke-width="6.5"/>
<path d="M689.1 375.7 V403.9 H683 Z" fill="#4acfff"/>
<rect x="675.6" y="427.8" width="16.8" height="35.69999999999997" rx="5" fill="#00b4f0" stroke="#45413c" stroke-width="6.5"/>
<path d="M689.1 431.1 V460.2 H683 Z" fill="#4acfff"/>
<rect x="883.1" y="316.5" width="16.8" height="36.6" rx="5" fill="#00b4f0" stroke="#45413c" stroke-width="6.5"/>
<path d="M896.6 319.8 V349.8 H890.5 Z" fill="#4acfff"/>
<rect x="883.1" y="372.4" width="16.8" height="34.79999999999999" rx="5" fill="#00b4f0" stroke="#45413c" stroke-width="6.5"/>
<path d="M896.6 375.7 V403.9 H890.5 Z" fill="#4acfff"/>
<rect x="883.1" y="427.8" width="16.8" height="35.69999999999997" rx="5" fill="#00b4f0" stroke="#45413c" stroke-width="6.5"/>
<path d="M896.6 431.1 V460.2 H890.5 Z" fill="#4acfff"/>
<path d="M774.00 287.50 Q774.00 281.50 780.00 281.50 L795.90 281.50 Q801.90 281.50 801.90 287.50 L801.90 295.25 Q801.90 301.25 807.90 301.25 L813.40 301.25 Q819.40 301.25 819.40 307.25 L819.40 326.50 Q819.40 332.50 813.40 332.50 L807.90 332.50 Q801.90 332.50 801.90 338.50 L801.90 346.50 Q801.90 352.50 795.90 352.50 L780.00 352.50 Q774.00 352.50 774.00 346.50 L774.00 338.50 Q774.00 332.50 768.00 332.50 L762.25 332.50 Q756.25 332.50 756.25 326.50 L756.25 307.25 Q756.25 301.25 762.25 301.25 L768.00 301.25 Q774.00 301.25 774.00 295.25 Z" fill="#45413c"/>
<path d="M780.60 289.70 Q780.60 288.20 782.10 288.20 L793.90 288.20 Q795.40 288.20 795.40 289.70 L795.40 306.20 Q795.40 307.70 796.90 307.70 L811.30 307.70 Q812.80 307.70 812.80 309.20 L812.80 324.50 Q812.80 326.00 811.30 326.00 L796.90 326.00 Q795.40 326.00 795.40 327.50 L795.40 344.00 Q795.40 345.50 793.90 345.50 L782.10 345.50 Q780.60 345.50 780.60 344.00 L780.60 327.50 Q780.60 326.00 779.10 326.00 L764.30 326.00 Q762.80 326.00 762.80 324.50 L762.80 309.20 Q762.80 307.70 764.30 307.70 L779.10 307.70 Q780.60 307.70 780.60 306.20 Z" fill="#fe5a3c"/>
<rect x="739" y="392" width="98.3" height="26.5" rx="7" fill="#acc1d9" stroke="#45413c" stroke-width="6.5"/>
<rect x="742.3" y="405.3" width="91.7" height="10" fill="#94abc2"/>
<rect x="739" y="392" width="98.3" height="26.5" rx="7" fill="none" stroke="#45413c" stroke-width="6.5"/>
<path d="M745.6 418.5 V506 H830.3 V418.5" fill="#00b4f0" stroke="#45413c" stroke-width="6.5"/>
<path d="M764 503 L784.5 446 V503 Z" fill="#4acfff"/>
<path d="M791 503 V421.5 H827.2 V436 L803 503 Z" fill="#4acfff"/>
<path d="M745.6 420.8 V503" stroke="#45413c" stroke-width="6.5"/>
<line x1="787.8" y1="419" x2="787.8" y2="506" stroke="#45413c" stroke-width="6.8"/>
<path d="M654.2 503.6 a4 4 0 0 0 4 4 H917.5 a4 4 0 0 0 4 -4" fill="none" stroke="#45413c" stroke-width="6.5"/>
<g clip-path="url(#sel)" stroke="rgba(170,170,170,0.15)" stroke-width="7" fill="none"><path d="M343 540 L579 210" /><path d="M393 540 L629 210" /><path d="M443 540 L679 210" /><path d="M493 540 L729 210" /><path d="M543 540 L779 210" /><path d="M593 540 L829 210" /><path d="M643 540 L879 210" /><path d="M693 540 L929 210" /><path d="M743 540 L979 210" /><path d="M793 540 L1029 210" /><path d="M843 540 L1079 210" /><path d="M893 540 L1129 210" /><path d="M943 540 L1179 210" /><path d="M993 540 L1229 210" /><path d="M1043 540 L1279 210" /></g>
<rect x="643" y="214.2" width="289.5" height="324.5" fill="none" stroke="#a6a6a6" stroke-width="1"/>
<line x1="787.5" y1="197" x2="787.5" y2="211" stroke="#a6a6a6" stroke-width="1"/>
<path d="M793.10 187.70 A5.3 5.3 0 1 0 793.10 192.90" fill="none" stroke="#8c8c8c" stroke-width="3.4"/><path d="M793.10 187.70 A5.3 5.3 0 1 0 793.10 192.90" fill="none" stroke="#fff" stroke-width="1.2"/><path d="M790.30 190.90 L797.70 190.90 L794.00 194.80 Z" fill="#fff" stroke="#8c8c8c" stroke-width="1.1" stroke-linejoin="round"/>
<circle cx="643" cy="214.2" r="3.3" fill="#fff" stroke="#858585" stroke-width="1.25"/>
<circle cx="787.5" cy="214.2" r="3.3" fill="#fff" stroke="#858585" stroke-width="1.25"/>
<circle cx="932.5" cy="214.2" r="3.3" fill="#fff" stroke="#858585" stroke-width="1.25"/>
<circle cx="643" cy="376.5" r="3.3" fill="#fff" stroke="#858585" stroke-width="1.25"/>
<circle cx="932.5" cy="376.5" r="3.3" fill="#fff" stroke="#858585" stroke-width="1.25"/>
<circle cx="643" cy="538.7" r="3.3" fill="#fff" stroke="#858585" stroke-width="1.25"/>
<circle cx="787.5" cy="538.7" r="3.3" fill="#fff" stroke="#858585" stroke-width="1.25"/>
<circle cx="932.5" cy="538.7" r="3.3" fill="#fff" stroke="#858585" stroke-width="1.25"/>
</svg>
<div class="a" style="left:0;top:704px;width:1280px;height:15px;background:#f3f2f1;border-top:1px solid #d8d8d8"></div>
<div class="a" style="left:0;top:719px;width:1280px;height:1px;background:#202030"></div>
<svg class="a" style="left:83px;top:705px" width="12" height="12" viewBox="0 0 12 12" fill="none" stroke="#444" stroke-width="0.9">
<path d="M1 2 H5 C5.5 2 6 2.5 6 3 V11 C6 10.5 5.5 10 5 10 H1 Z"/><path d="M11 2 H7 C6.5 2 6 2.5 6 3 V11 C6 10.5 6.5 10 7 10 H11 Z"/><path d="M8 6 L9 8 L10.5 4" stroke-width="0.8"/></svg>
<svg class="a" style="left:1015px;top:705px" width="12" height="12" viewBox="0 0 12 12" fill="none" stroke="#444" stroke-width="0.9">
<path d="M1 3 V1 H3 M9 1 H11 V3 M11 9 V11 H9 M3 11 H1 V9"/><path d="M3.5 2.5 H7 L8.5 4 V9.5 H3.5 Z"/></svg>
<svg class="a" style="left:1096px;top:705px" width="11" height="11" viewBox="0 0 11 11" fill="none" stroke="#555" stroke-width="0.9">
<rect x="1" y="1.5" width="9" height="8"/><path d="M5.5 1.5 V9.5 M2.5 4 H4 M2.5 6 H4 M7 4 H8.5 M7 6 H8.5"/></svg>
<div class="a" style="left:1115.7px;top:704px;width:27px;height:15px;background:#c6c6c6"></div>
<svg class="a" style="left:1124px;top:705px" width="10" height="12" viewBox="0 0 10 12" fill="none" stroke="#333" stroke-width="0.9">
<rect x="1.5" y="1" width="7" height="10"/><path d="M3 3.5 H7 M3 5.5 H7 M3 7.5 H7"/></svg>
<svg class="a" style="left:1151px;top:705px" width="12" height="12" viewBox="0 0 12 12" fill="none" stroke="#444" stroke-width="0.9">
<rect x="1" y="1" width="7.5" height="9"/><path d="M2.5 3 H7 M2.5 5 H5"/><circle cx="8.5" cy="8.5" r="2.8" fill="#444"/></svg>
<div class="a" style="left:1174.5px;top:711px;width:5px;height:1px;background:#666"></div>
<div class="a" style="left:1183.5px;top:711px;width:70px;height:1px;background:#aaa"></div>
<div class="a" style="left:1213.5px;top:707px;width:3px;height:9px;background:#555"></div>
<div class="a" style="left:1256px;top:711px;width:6px;height:1px;background:#666"></div>
<div class="a" style="left:1258.5px;top:708.5px;width:1px;height:6px;background:#666"></div>
<div class="a" style="left:-0.73px;top:7.80px;font-size:8.6px;line-height:8.6px;color:#fff;font-weight:400;transform:scaleX(0.926);transform-origin:0 0;-webkit-text-stroke:0.15px #fff;-webkit-text-stroke:0.3px #fff;">eguardado</div>
<div class="a" style="left:294.56px;top:7.80px;font-size:8.6px;line-height:8.6px;color:#fff;font-weight:400;transform:scaleX(0.981);transform-origin:0 0;-webkit-text-stroke:0.15px #fff;-webkit-text-stroke:0.3px #fff;">Documento1 &nbsp;- &nbsp;Word</div>
<div class="a" style="left:545.27px;top:8.50px;font-size:8.2px;line-height:8.2px;color:#1e3d6e;font-weight:400;transform:scaleX(0.970);transform-origin:0 0;-webkit-text-stroke:0.15px #1e3d6e;">Buscar</div>
<div class="a" style="left:1059.59px;top:8.00px;font-size:8.4px;line-height:8.4px;color:#fff;font-weight:400;transform:scaleX(0.949);transform-origin:0 0;-webkit-text-stroke:0.15px #fff;-webkit-text-stroke:0.3px #fff;">Luis Miguel Vela Vela</div>
<div class="a" style="left:1144.65px;top:9.20px;font-size:8px;line-height:8px;color:#c8dcf5;font-weight:400;transform:scaleX(1.128);transform-origin:0 0;-webkit-text-stroke:0.15px #c8dcf5;">LM</div>
<div class="a" style="left:-3.00px;top:29.50px;font-size:9.9px;line-height:9.9px;color:#444;font-weight:400;transform:scaleX(1.000);transform-origin:0 0;-webkit-text-stroke:0.15px #444;">vo</div>
<div class="a" style="left:27.17px;top:29.50px;font-size:9.9px;line-height:9.9px;color:#444;font-weight:400;transform:scaleX(0.933);transform-origin:0 0;-webkit-text-stroke:0.15px #444;">Inicio</div>
<div class="a" style="left:67.81px;top:29.50px;font-size:9.9px;line-height:9.9px;color:#444;font-weight:400;transform:scaleX(0.938);transform-origin:0 0;-webkit-text-stroke:0.15px #444;">Insertar</div>
<div class="a" style="left:119.01px;top:29.50px;font-size:9.9px;line-height:9.9px;color:#444;font-weight:400;transform:scaleX(0.914);transform-origin:0 0;-webkit-text-stroke:0.15px #444;">Diseño</div>
<div class="a" style="left:165.90px;top:29.50px;font-size:9.9px;line-height:9.9px;color:#444;font-weight:400;transform:scaleX(0.932);transform-origin:0 0;-webkit-text-stroke:0.15px #444;">Disposición</div>
<div class="a" style="left:231.33px;top:29.50px;font-size:9.9px;line-height:9.9px;color:#444;font-weight:400;transform:scaleX(0.889);transform-origin:0 0;-webkit-text-stroke:0.15px #444;">Referencias</div>
<div class="a" style="left:297.54px;top:29.50px;font-size:9.9px;line-height:9.9px;color:#444;font-weight:400;transform:scaleX(0.923);transform-origin:0 0;-webkit-text-stroke:0.15px #444;">Correspondencia</div>
<div class="a" style="left:386.34px;top:29.50px;font-size:9.9px;line-height:9.9px;color:#444;font-weight:400;transform:scaleX(0.880);transform-origin:0 0;-webkit-text-stroke:0.15px #444;">Revisar</div>
<div class="a" style="left:435.00px;top:29.50px;font-size:9.9px;line-height:9.9px;color:#444;font-weight:400;transform:scaleX(0.874);transform-origin:0 0;-webkit-text-stroke:0.15px #444;">Vista</div>
<div class="a" style="left:475.00px;top:29.50px;font-size:9.9px;line-height:9.9px;color:#444;font-weight:400;transform:scaleX(0.865);transform-origin:0 0;-webkit-text-stroke:0.15px #444;">Ayuda</div>
<div class="a" style="left:518.96px;top:29.50px;font-size:9.9px;line-height:9.9px;color:#2b579a;font-weight:400;transform:scaleX(0.981);transform-origin:0 0;-webkit-text-stroke:0.15px #2b579a;">Formato de forma</div>
<div class="a" style="left:615.80px;top:29.50px;font-size:9.9px;line-height:9.9px;color:#2b579a;font-weight:400;transform:scaleX(0.934);transform-origin:0 0;-webkit-text-stroke:0.15px #2b579a;">Formato de la imagen</div>
<div class="a" style="left:1154.49px;top:30.40px;font-size:9.6px;line-height:9.6px;color:#2e4d80;font-weight:400;transform:scaleX(1.012);transform-origin:0 0;-webkit-text-stroke:0.15px #2e4d80;-webkit-text-stroke:0.25px #2e4d80;">Compartir</div>
<div class="a" style="left:1226.41px;top:30.40px;font-size:9.6px;line-height:9.6px;color:#2e4d80;font-weight:400;transform:scaleX(0.983);transform-origin:0 0;-webkit-text-stroke:0.15px #2e4d80;-webkit-text-stroke:0.25px #2e4d80;">Comentarios</div>
<div class="a" style="left:86.04px;top:49.60px;font-size:9.4px;line-height:9.4px;color:#333;font-weight:400;transform:scaleX(0.882);transform-origin:0 0;-webkit-text-stroke:0.15px #333;">Editar forma</div>
<div class="a" style="left:86.03px;top:65.50px;font-size:9.4px;line-height:9.4px;color:#333;font-weight:400;transform:scaleX(0.890);transform-origin:0 0;-webkit-text-stroke:0.15px #333;">Dibujar cuadro de texto</div>
<div class="a" style="left:333.09px;top:49.60px;font-size:9.4px;line-height:9.4px;color:#333;font-weight:400;transform:scaleX(0.880);transform-origin:0 0;-webkit-text-stroke:0.15px #333;">Relleno de forma</div>
<div class="a" style="left:333.30px;top:65.50px;font-size:9.4px;line-height:9.4px;color:#333;font-weight:400;transform:scaleX(0.904);transform-origin:0 0;-webkit-text-stroke:0.15px #333;">Contorno de forma</div>
<div class="a" style="left:333.10px;top:81.50px;font-size:9.4px;line-height:9.4px;color:#333;font-weight:400;transform:scaleX(0.872);transform-origin:0 0;-webkit-text-stroke:0.15px #333;">Efectos de forma</div>
<div class="a" style="left:571.84px;top:49.60px;font-size:9.4px;line-height:9.4px;color:#b4b4b4;font-weight:400;transform:scaleX(0.880);transform-origin:0 0;-webkit-text-stroke:0.15px #b4b4b4;">Relleno de texto</div>
<div class="a" style="left:572.05px;top:65.50px;font-size:9.4px;line-height:9.4px;color:#b4b4b4;font-weight:400;transform:scaleX(0.902);transform-origin:0 0;-webkit-text-stroke:0.15px #b4b4b4;">Contorno de texto</div>
<div class="a" style="left:571.85px;top:81.50px;font-size:9.4px;line-height:9.4px;color:#333;font-weight:400;transform:scaleX(0.868);transform-origin:0 0;-webkit-text-stroke:0.15px #333;">Efectos de texto</div>
<div class="a" style="left:676.23px;top:49.60px;font-size:9.4px;line-height:9.4px;color:#b4b4b4;font-weight:400;transform:scaleX(0.899);transform-origin:0 0;-webkit-text-stroke:0.15px #b4b4b4;">Dirección del texto</div>
<div class="a" style="left:676.90px;top:65.50px;font-size:9.4px;line-height:9.4px;color:#333;font-weight:400;transform:scaleX(0.891);transform-origin:0 0;-webkit-text-stroke:0.15px #333;">Alinear texto</div>
<div class="a" style="left:676.47px;top:81.50px;font-size:9.4px;line-height:9.4px;color:#b4b4b4;font-weight:400;transform:scaleX(0.864);transform-origin:0 0;-webkit-text-stroke:0.15px #b4b4b4;">Crear vínculo</div>
<div class="a" style="left:779.78px;top:72.90px;font-size:9.4px;line-height:9.4px;color:#333;font-weight:400;transform:scaleX(0.862);transform-origin:0 0;-webkit-text-stroke:0.15px #333;">Texto</div>
<div class="a" style="left:769.55px;top:83.50px;font-size:9.4px;line-height:9.4px;color:#333;font-weight:400;transform:scaleX(0.894);transform-origin:0 0;-webkit-text-stroke:0.15px #333;">alternativo</div>
<div class="a" style="left:836.58px;top:49.60px;font-size:9.4px;line-height:9.4px;color:#333;font-weight:400;transform:scaleX(0.898);transform-origin:0 0;-webkit-text-stroke:0.15px #333;">Posición</div>
<div class="a" style="left:837.25px;top:65.50px;font-size:9.4px;line-height:9.4px;color:#333;font-weight:400;transform:scaleX(0.884);transform-origin:0 0;-webkit-text-stroke:0.15px #333;">Ajustar texto</div>
<div class="a" style="left:837.04px;top:81.50px;font-size:9.4px;line-height:9.4px;color:#333;font-weight:400;transform:scaleX(0.838);transform-origin:0 0;-webkit-text-stroke:0.15px #333;">Traer adelante</div>
<div class="a" style="left:918.12px;top:49.60px;font-size:9.4px;line-height:9.4px;color:#333;font-weight:400;transform:scaleX(0.842);transform-origin:0 0;-webkit-text-stroke:0.15px #333;">Enviar atrás</div>
<div class="a" style="left:917.75px;top:65.50px;font-size:9.4px;line-height:9.4px;color:#333;font-weight:400;transform:scaleX(0.867);transform-origin:0 0;-webkit-text-stroke:0.15px #333;">Panel de selección</div>
<div class="a" style="left:918.75px;top:81.50px;font-size:9.4px;line-height:9.4px;color:#333;font-weight:400;transform:scaleX(0.871);transform-origin:0 0;-webkit-text-stroke:0.15px #333;">Alinear</div>
<div class="a" style="left:1005.60px;top:49.60px;font-size:9.4px;line-height:9.4px;color:#333;font-weight:400;transform:scaleX(0.914);transform-origin:0 0;-webkit-text-stroke:0.15px #333;">Agrupar</div>
<div class="a" style="left:1005.17px;top:65.50px;font-size:9.4px;line-height:9.4px;color:#333;font-weight:400;transform:scaleX(0.859);transform-origin:0 0;-webkit-text-stroke:0.15px #333;">Girar</div>
<div class="a" style="left:48.06px;top:100.60px;font-size:8.6px;line-height:8.6px;color:#555;font-weight:400;transform:scaleX(0.921);transform-origin:0 0;-webkit-text-stroke:0.15px #555;">Insertar formas</div>
<div class="a" style="left:266.81px;top:100.60px;font-size:8.6px;line-height:8.6px;color:#555;font-weight:400;transform:scaleX(0.922);transform-origin:0 0;-webkit-text-stroke:0.15px #555;">Estilos de forma</div>
<div class="a" style="left:498.30px;top:100.60px;font-size:8.6px;line-height:8.6px;color:#555;font-weight:400;transform:scaleX(0.940);transform-origin:0 0;-webkit-text-stroke:0.15px #555;">Estilos de WordArt</div>
<div class="a" style="left:699.52px;top:100.60px;font-size:8.6px;line-height:8.6px;color:#555;font-weight:400;transform:scaleX(0.912);transform-origin:0 0;-webkit-text-stroke:0.15px #555;">Texto</div>
<div class="a" style="left:765.60px;top:100.60px;font-size:8.6px;line-height:8.6px;color:#555;font-weight:400;transform:scaleX(0.931);transform-origin:0 0;-webkit-text-stroke:0.15px #555;">Accesibilidad</div>
<div class="a" style="left:916.44px;top:100.60px;font-size:8.6px;line-height:8.6px;color:#555;font-weight:400;transform:scaleX(0.922);transform-origin:0 0;-webkit-text-stroke:0.15px #555;">Organizar</div>
<div class="a" style="left:202.30px;top:64.00px;font-size:8.4px;line-height:8.4px;color:#222;font-weight:400;transform:scaleX(0.905);transform-origin:0 0;-webkit-text-stroke:0.15px #222;">Abc</div>
<div class="a" style="left:241.20px;top:64.00px;font-size:8.4px;line-height:8.4px;color:#fff;font-weight:400;transform:scaleX(0.905);transform-origin:0 0;-webkit-text-stroke:0.15px #fff;-webkit-text-stroke:0.3px #fff;">Abc</div>
<div class="a" style="left:280.00px;top:64.00px;font-size:8.4px;line-height:8.4px;color:#fff;font-weight:400;transform:scaleX(0.905);transform-origin:0 0;-webkit-text-stroke:0.15px #fff;">Abc</div>
<div class="a" style="left:-0.65px;top:706.60px;font-size:8.8px;line-height:8.8px;color:#444;font-weight:400;transform:scaleX(0.873);transform-origin:0 0;-webkit-text-stroke:0.15px #444;">1 de 1</div>
<div class="a" style="left:34.18px;top:706.60px;font-size:8.8px;line-height:8.8px;color:#444;font-weight:400;transform:scaleX(0.886);transform-origin:0 0;-webkit-text-stroke:0.15px #444;">0 palabras</div>
<div class="a" style="left:105.60px;top:706.60px;font-size:8.8px;line-height:8.8px;color:#444;font-weight:400;transform:scaleX(0.870);transform-origin:0 0;-webkit-text-stroke:0.15px #444;">Español (Perú)</div>
<div class="a" style="left:1027.13px;top:706.60px;font-size:8.8px;line-height:8.8px;color:#444;font-weight:400;transform:scaleX(0.931);transform-origin:0 0;-webkit-text-stroke:0.15px #444;">Concentración</div>
<div class="a" style="left:1270.43px;top:706.60px;font-size:8.8px;line-height:8.8px;color:#444;font-weight:400;transform:scaleX(1.134);transform-origin:0 0;-webkit-text-stroke:0.15px #444;">90%</div>
<svg class="a" style="left:980px;top:25px" width="250" height="250" viewBox="980 25 250 250">
<circle cx="1103.8" cy="147.5" r="111" fill="rgba(200,200,200,0.42)"/>
<circle cx="1103" cy="147.5" r="100" fill="#52be48"/>
<path d="M1046.2 159.1 L1061.7 137.7 L1092.8 160 L1138.3 94.9 L1160 111.2 L1099.1 200.6 Z" fill="#fff"/>
</svg>
</body></html>
